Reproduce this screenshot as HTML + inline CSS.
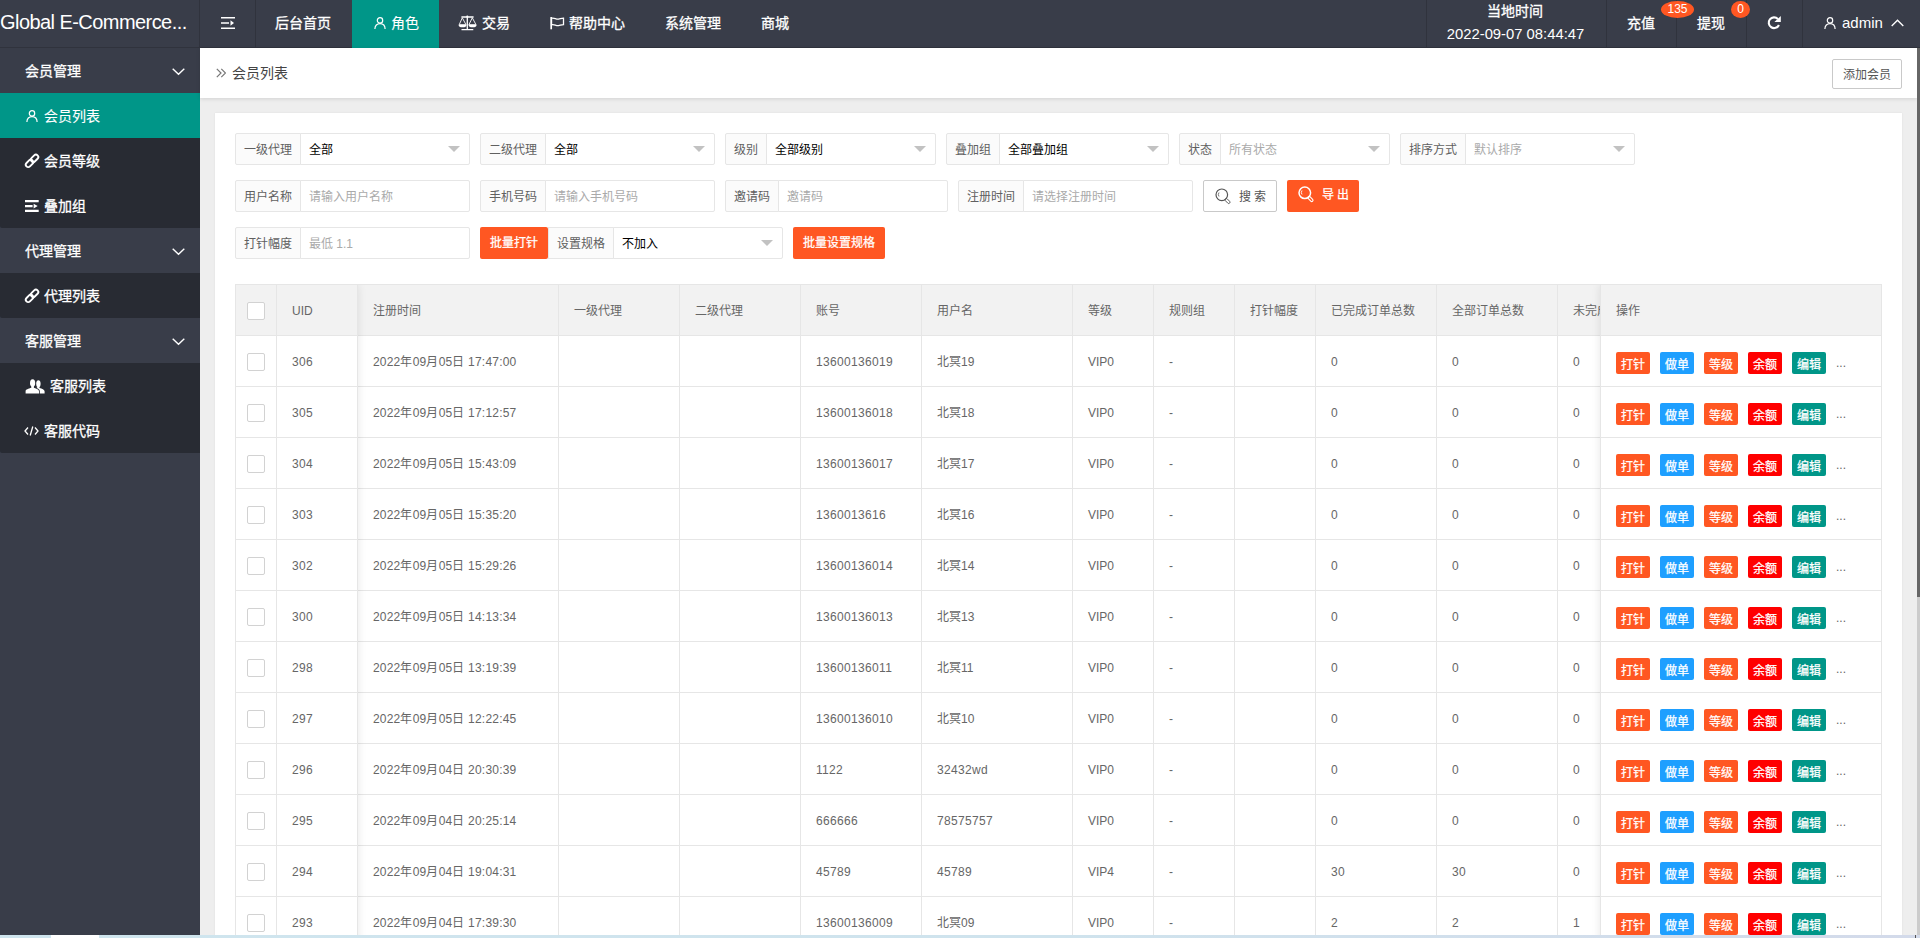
<!DOCTYPE html>
<html lang="zh-CN"><head><meta charset="utf-8"><title>会员列表</title>
<style>
*{box-sizing:border-box;margin:0;padding:0}
html,body{width:1920px;height:938px;overflow:hidden}
body{position:relative;background:#eeeeee;font-family:"Liberation Sans",sans-serif;font-size:14px;color:#333;line-height:1}
a{text-decoration:none;color:inherit}
i{font-style:normal}
svg{display:block}
.abs{position:absolute}
/* header */
.hd{position:absolute;left:0;top:0;width:1920px;height:48px;background:#393d49;border-bottom:1px solid #30333d;color:#fff}
.logo{position:absolute;left:0;top:0;width:200px;height:47px;line-height:45px;font-size:20px;white-space:nowrap;overflow:hidden;border-right:1px solid #30333d;letter-spacing:-.56px}
.flex{position:absolute;left:200px;top:0;width:56px;height:47px;border-right:1px solid #30333d}
.nav{position:absolute;top:0;height:47px;line-height:46px;font-size:14px;color:#fff;white-space:nowrap}
.nav.on{background:#009688;height:48px}
.nav svg{position:absolute}
.hr{position:absolute;top:0;height:47px;border-left:1px solid #30333d;color:#fff;text-align:center;white-space:nowrap}
.badge{position:absolute;height:17px;line-height:17px;border-radius:50%;background:#ff5722;color:#fff;font-size:12px;text-align:center}
/* sidebar */
.side{position:absolute;left:0;top:48px;width:200px;height:890px;background:#393d49;color:#fff}
.sp{position:absolute;left:0;width:200px;height:45px;line-height:47px;padding-left:25px;font-size:14px;color:#fff}
.sp svg{position:absolute;left:172px;top:20px}
.sc{position:absolute;left:0;width:200px;background:#282b33;border-radius:0 0 0 2px}
.si{position:relative;height:45px;line-height:47px;padding-left:44px;font-size:14px;color:#fff}
.si.on{background:#009688}
.si svg{position:absolute}
/* title bar */
.tb{position:absolute;left:200px;top:48px;width:1717px;height:50px;background:#fff;box-shadow:0 1px 4px rgba(0,0,0,.12);color:#444;font-size:14px;line-height:50px}
.tb .t{position:absolute;left:32px;top:0}
.tb svg{position:absolute;left:16px;top:20px}
.btn-add{position:absolute;left:1632px;top:11px;width:70px;height:30px;line-height:30px;border:1px solid #c9c9c9;border-radius:2px;background:#fff;color:#555;font-size:12px;text-align:center}
/* card */
.card{position:absolute;left:215px;top:113px;width:1687px;height:900px;background:#fff;box-shadow:0 0 2px 0 rgba(0,0,0,.07)}
/* form */
.fg{position:absolute;height:32px;font-size:12px;line-height:32px;white-space:nowrap}
.fg .l{position:absolute;left:0;top:0;height:32px;border:1px solid #e6e6e6;background:#fbfbfb;color:#606060;padding:0 8px;border-radius:2px 0 0 2px}
.fg .v{position:absolute;top:0;height:32px;width:170px;border:1px solid #e6e6e6;background:#fff;color:#000;padding-left:8px;border-radius:0 2px 2px 0}
.fg .v.ph{color:#aaa}
.fg .v.sel:after{content:"";position:absolute;right:9px;top:12px;border:6px solid transparent;border-top-color:#c2c2c2}
.btn{position:absolute;height:32px;line-height:32px;border-radius:2px;background:#ff5722;color:#fff;font-size:12px;text-align:center;white-space:nowrap}
.btn.pri{background:#fff;border:1px solid #c9c9c9;color:#555;line-height:33px}
/* table */
.tbl-wrap{position:absolute;left:235px;top:284px;width:1647px;height:700px;border:1px solid #e6e6e6;border-bottom:none;overflow:hidden;background:#fff}
.tbl{border-collapse:separate;border-spacing:0;table-layout:fixed;width:1443px;font-size:12px;color:#666}
.tbl th,.tbl td{height:51px;border-right:1px solid #e6e6e6;border-bottom:1px solid #e6e6e6;padding:0;text-align:left;font-weight:normal;vertical-align:middle;overflow:hidden}
.tbl th{background:#f2f2f2}
.tbl .c{padding:0 15px;height:28px;line-height:28px;white-space:nowrap;overflow:hidden;position:relative;top:1px}
.ck{text-align:center}
.cb{display:block;width:18px;height:18px;border:1px solid #d2d2d2;border-radius:2px;background:#fff;margin:2px 0 0 11px}
.fix-l{position:absolute;left:0;top:0;width:122px;height:700px;box-shadow:1px 0 8px rgba(0,0,0,.08);pointer-events:none}
.fix-r{position:absolute;left:1364px;top:0;width:282px;height:700px;background:#fff;border-left:1px solid #e6e6e6;box-shadow:-1px 0 8px rgba(0,0,0,.08);font-size:12px;color:#666}
.fr-h{height:51px;background:#f2f2f2;border-bottom:1px solid #e6e6e6;line-height:50px}
.fr-h .c{padding:0 15px;position:relative;top:1px}
.fr-r{position:relative;height:51px;border-bottom:1px solid #e6e6e6;white-space:nowrap}
.b{position:absolute;top:16px;width:34px;height:22px;line-height:26px;border-radius:2px;color:#fff;font-size:12px;text-align:center}
.b.o{background:#ff5722}.b.bl{background:#1e9fff}.b.r{background:#ff0000}.b.g{background:#009688}
.b:nth-child(1){left:15px}.b:nth-child(2){left:59px}.b:nth-child(3){left:103px}.b:nth-child(4){left:147px}.b:nth-child(5){left:191px}
.more{position:absolute;left:235px;top:20px;font-size:12px;line-height:14px;color:#666}
/* scrollbars */
.sb-track{position:absolute;left:1917px;top:48px;width:3px;height:890px;background:#cccccc}
.sb-thumb{position:absolute;left:1917px;top:48px;width:3px;height:549px;background:#666666}
.hbar{position:absolute;left:0;top:935px;width:1920px;height:3px;background:linear-gradient(to right,#cfe5ee 0%,#cfe3ed 55%,#d3daea 100%)}
.hbar i{position:absolute;left:51px;top:0;width:48px;height:3px;background:#fff}
.hbar b{position:absolute;left:1915px;top:0;width:1px;height:3px;background:#555}

.n{letter-spacing:.33px}.d{letter-spacing:.2px}
.hd,.side{-webkit-text-stroke:.3px #fff}
.badge,.logo,.lat{-webkit-text-stroke:0}
.b,.btn{-webkit-text-stroke:.25px #fff}.btn.pri{-webkit-text-stroke:0}
.si.on,.nav.on{-webkit-text-stroke:.12px #fff}

</style></head>
<body>
<!-- header -->
<div class="hd">
  <div class="logo">Global E-Commerce...</div>
  <div class="flex"><svg class="abs" style="left:21px;top:17px" width="14" height="12" viewBox="0 0 14 12"><path d="M0 .8h14M0 6h8M0 11.2h14" stroke="#fff" stroke-width="1.5" fill="none"/><path d="M9.5 3.2L13 6 9.5 8.8z" fill="#fff"/></svg></div>
  <a class="nav" style="left:255px;width:97px;padding-left:20px">后台首页</a>
  <a class="nav on" style="left:352px;width:87px;padding-left:39px"><svg style="left:21.500px;top:17px" width="12" height="12" viewBox="0 0 12 12"><circle cx="6" cy="3.400" r="2.700" fill="none" stroke="#fff" stroke-width="1.200"/><path d="M.9 12C.9 8.600 3 6.600 6 6.600s5.100 2 5.100 5.400" fill="none" stroke="#fff" stroke-width="1.200"/></svg>角色</a>
  <a class="nav" style="left:439px;width:91px;padding-left:43px"><svg style="left:19px;top:15px" width="19" height="16" viewBox="0 0 19 16"><path d="M3.400 2H15.600M9.300 2V14.600M3.500 14.600H15.300" stroke="#fff" stroke-width="1.300" fill="none"/><path d="M4.300 2.800L1.200 9.700H8zM14.300 2.800L10.900 9.700H18z" stroke="#fff" stroke-width=".9" fill="none" stroke-linejoin="round"/><path d="M.6 9.700H8.500A3.950 2.600 0 0 1 .6 9.700zM10.600 9.700H18.600A4 2.600 0 0 1 10.600 9.700z" fill="#fff"/><circle cx="9.300" cy="1.500" r="1.100" fill="#fff"/></svg>交易</a>
  <a class="nav" style="left:530px;width:115px;padding-left:39px"><svg style="left:20px;top:16.700px" width="15" height="13" viewBox="0 0 15 13"><path d="M1.200 0v12.300" stroke="#fff" stroke-width="1.700"/><path d="M1.5 1.3c2.5-1 4.5 1.2 7 .8 1.8-.3 3-1 5-1v6.5c-2 0-3.2.7-5 1-2.5.4-4.500-1.800-7-.800z" fill="none" stroke="#fff" stroke-width="1.3"/></svg>帮助中心</a>
  <a class="nav" style="left:645px;width:96px;padding-left:20px">系统管理</a>
  <a class="nav" style="left:741px;width:68px;padding-left:20px">商城</a>

  <div class="hr" style="left:1426px;width:180px"><div class="abs" style="left:-2px;width:180px;top:3px;font-size:14px;line-height:16px">当地时间</div><div class="abs lat" style="left:-1.500px;width:180px;top:25px;font-size:14.8px;line-height:18px">2022-09-07 08:44:47</div></div>
  <div class="hr" style="left:1606px;width:70px;line-height:46px;font-size:14px;padding-right:2px">充值</div>
  <div class="hr" style="left:1676px;width:70px;line-height:46px;font-size:14px;padding-right:2px">提现</div>
  <div class="hr" style="left:1746px;width:56px"><svg class="abs" style="left:20px;top:16px" width="14" height="14" viewBox="0 0 14 14"><path d="M10.880 2.920A5.350 5.350 0 1 0 11.950 8.960" fill="none" stroke="#fff" stroke-width="2.100"/><path d="M13.800.1V5.900H7.400z" fill="#fff"/></svg></div>
  <div class="hr" style="left:1802px;width:115px;text-align:left"><svg class="abs" style="left:21px;top:17px" width="12" height="12" viewBox="0 0 12 12"><circle cx="6" cy="3.400" r="2.700" fill="none" stroke="#fff" stroke-width="1.200"/><path d="M.9 12C.9 8.600 3 6.600 6 6.600s5.100 2 5.100 5.400" fill="none" stroke="#fff" stroke-width="1.200"/></svg><span class="abs lat" style="left:39px;top:0;line-height:45px;font-size:15px">admin</span><svg class="abs" style="left:88px;top:19px" width="13" height="8" viewBox="0 0 13 8"><path d="M.7 7L6.500 1.300 12.300 7" fill="none" stroke="#fff" stroke-width="1.400"/></svg></div>
  <span class="badge" style="left:1661px;top:1px;width:33px">135</span>
  <span class="badge" style="left:1731px;top:1px;width:19px">0</span>
</div>

<!-- sidebar -->
<div class="side">
  <div class="sp" style="top:0">会员管理<svg width="13" height="8" viewBox="0 0 13 8"><path d="M.7.7l5.800 5.600L12.300.7" fill="none" stroke="#fff" stroke-width="1.400"/></svg></div>
  <div class="sc" style="top:45px;height:135px">
    <div class="si on"><svg style="left:26.300px;top:17px" width="12" height="12" viewBox="0 0 12 12"><circle cx="6" cy="3.400" r="2.700" fill="none" stroke="#fff" stroke-width="1.200"/><path d="M.9 12C.9 8.600 3 6.600 6 6.600s5.100 2 5.100 5.400" fill="none" stroke="#fff" stroke-width="1.200"/></svg>会员列表</div>
    <div class="si"><svg style="left:24px;top:14.800px" width="16" height="16" viewBox="0 0 16 16"><g fill="none" stroke="#fff" stroke-width="1.900"><rect x="6.400" y="2.900" width="8.400" height="4.800" rx="2.400" transform="rotate(-45 10.600 5.300)"/><rect x="1.300" y="8" width="8.400" height="4.800" rx="2.400" transform="rotate(-45 5.500 10.400)"/></g></svg>会员等级</div>
    <div class="si"><svg style="left:25.400px;top:17px" width="14" height="12" viewBox="0 0 14 12"><path d="M0 1.100h13.700M0 6.100h7.600M0 10.800h13.700" stroke="#fff" stroke-width="2.200" fill="none"/><path d="M8.600 3.700L12.700 6.100 8.600 8.500z" fill="#fff"/></svg>叠加组</div>
  </div>
  <div class="sp" style="top:180px">代理管理<svg width="13" height="8" viewBox="0 0 13 8"><path d="M.7.7l5.800 5.600L12.300.7" fill="none" stroke="#fff" stroke-width="1.400"/></svg></div>
  <div class="sc" style="top:225px;height:45px">
    <div class="si"><svg style="left:24px;top:14.800px" width="16" height="16" viewBox="0 0 16 16"><g fill="none" stroke="#fff" stroke-width="1.900"><rect x="6.400" y="2.900" width="8.400" height="4.800" rx="2.400" transform="rotate(-45 10.600 5.300)"/><rect x="1.300" y="8" width="8.400" height="4.800" rx="2.400" transform="rotate(-45 5.500 10.400)"/></g></svg>代理列表</div>
  </div>
  <div class="sp" style="top:270px">客服管理<svg width="13" height="8" viewBox="0 0 13 8"><path d="M.7.7l5.800 5.600L12.300.7" fill="none" stroke="#fff" stroke-width="1.400"/></svg></div>
  <div class="sc" style="top:315px;height:90px">
    <div class="si" style="padding-left:50px"><svg style="left:25px;top:15.500px" width="20" height="15" viewBox="0 0 20 15"><g fill="#fff"><ellipse cx="7.600" cy="4" rx="2.600" ry="3.800"/><path d="M6.300 6.500h2.600v2.300c2.800.9 5.100 1.700 5.100 3.400v2.400H.6v-2.400c0-1.700 2.900-2.500 5.700-3.400z"/><ellipse cx="13.400" cy="4.700" rx="2.200" ry="3.500"/><path d="M12.800 7.500h1.700v1.500c2.500.8 5.100 1.600 5.100 3.300v2.300h-4.800v-2.400c0-1.500-1.300-2.400-3.200-3.100z"/></g></svg>客服列表</div>
    <div class="si"><svg style="left:24px;top:18px" width="15" height="10" viewBox="0 0 15 10"><path d="M4 1.500L1 5l3 3.500M11 1.500L14 5l-3 3.500M8.800.5L6.200 9.500" fill="none" stroke="#fff" stroke-width="1.300"/></svg>客服代码</div>
  </div>
</div>

<!-- title bar -->
<div class="tb"><svg width="10" height="10" viewBox="0 0 10 10"><path d="M.8.8L5 5 .8 9.200M5.300.8L9.500 5 5.300 9.200" fill="none" stroke="#777" stroke-width="1.200"/></svg><span class="t">会员列表</span><a class="btn-add">添加会员</a></div>

<!-- card + form -->
<div class="card"></div>
<div class="fg" style="left:235px;top:133px"><span class="l" style="width:66px">一级代理</span><span class="v sel" style="left:65px">全部</span></div>
<div class="fg" style="left:480px;top:133px"><span class="l" style="width:66px">二级代理</span><span class="v sel" style="left:65px">全部</span></div>
<div class="fg" style="left:725px;top:133px"><span class="l" style="width:42px">级别</span><span class="v sel" style="left:41px">全部级别</span></div>
<div class="fg" style="left:946px;top:133px"><span class="l" style="width:54px">叠加组</span><span class="v sel" style="left:53px">全部叠加组</span></div>
<div class="fg" style="left:1179px;top:133px"><span class="l" style="width:42px">状态</span><span class="v sel ph" style="left:41px">所有状态</span></div>
<div class="fg" style="left:1400px;top:133px"><span class="l" style="width:66px">排序方式</span><span class="v sel ph" style="left:65px">默认排序</span></div>

<div class="fg" style="left:235px;top:180px"><span class="l" style="width:66px">用户名称</span><span class="v ph" style="left:65px">请输入用户名称</span></div>
<div class="fg" style="left:480px;top:180px"><span class="l" style="width:66px">手机号码</span><span class="v ph" style="left:65px">请输入手机号码</span></div>
<div class="fg" style="left:725px;top:180px"><span class="l" style="width:54px">邀请码</span><span class="v ph" style="left:53px">邀请码</span></div>
<div class="fg" style="left:958px;top:180px"><span class="l" style="width:66px">注册时间</span><span class="v ph" style="left:65px">请选择注册时间</span></div>
<a class="btn pri" style="left:1203px;top:180px;width:74px;text-align:left;padding-left:35px"><svg class="abs" style="left:11px;top:7px" width="17" height="17" viewBox="0 0 17 17"><circle cx="6.800" cy="6.800" r="5.800" fill="none" stroke="#555" stroke-width="1.200"/><path d="M4 4.500a3.500 3.500 0 0 0 0 4" fill="none" stroke="#555" stroke-width=".8"/><rect x="11.200" y="10" width="2.600" height="6" rx="1.300" transform="rotate(-45 12.500 13)" fill="none" stroke="#555" stroke-width=".9"/></svg>搜 索</a>
<a class="btn" style="left:1287px;top:180px;width:72px;text-align:left;padding-left:34.500px;line-height:31px;font-size:12px"><svg class="abs" style="left:11px;top:5.500px" width="17" height="17" viewBox="0 0 17 17"><circle cx="6.800" cy="6.800" r="5.800" fill="none" stroke="#fff" stroke-width="1.500"/><path d="M4 4.500a3.500 3.500 0 0 0 0 4" fill="none" stroke="#fff" stroke-width=".9"/><rect x="11.200" y="10" width="2.600" height="6" rx="1.300" transform="rotate(-45 12.500 13)" fill="none" stroke="#fff" stroke-width="1.100"/></svg>导 出</a>

<div class="fg" style="left:235px;top:227px"><span class="l" style="width:66px">打针幅度</span><span class="v ph" style="left:65px">最低 1.1</span></div>
<a class="btn" style="left:480px;top:227px;width:68px">批量打针</a>
<div class="fg" style="left:548px;top:227px"><span class="l" style="width:66px;border-radius:0">设置规格</span><span class="v sel" style="left:65px">不加入</span></div>
<a class="btn" style="left:793px;top:227px;width:92px">批量设置规格</a>

<div class="tbl-wrap">
<table class="tbl"><colgroup><col style="width:41px"><col style="width:81px"><col style="width:201px"><col style="width:121px"><col style="width:121px"><col style="width:121px"><col style="width:151px"><col style="width:81px"><col style="width:81px"><col style="width:81px"><col style="width:121px"><col style="width:121px"><col style="width:121px"></colgroup>
<thead><tr><th class="ck"><i class="cb"></i></th><th><div class="c">UID</div></th><th><div class="c">注册时间</div></th><th><div class="c">一级代理</div></th><th><div class="c">二级代理</div></th><th><div class="c">账号</div></th><th><div class="c">用户名</div></th><th><div class="c">等级</div></th><th><div class="c">规则组</div></th><th><div class="c">打针幅度</div></th><th><div class="c">已完成订单总数</div></th><th><div class="c">全部订单总数</div></th><th><div class="c">未完成订单总数</div></th></tr></thead><tbody>
<tr><td class="ck"><i class="cb"></i></td><td><div class="c n">306</div></td><td><div class="c d">2022年09月05日 17:47:00</div></td><td><div class="c"></div></td><td><div class="c"></div></td><td><div class="c n">13600136019</div></td><td><div class="c">北冥19</div></td><td><div class="c">VIP0</div></td><td><div class="c">-</div></td><td><div class="c"></div></td><td><div class="c n">0</div></td><td><div class="c n">0</div></td><td><div class="c n">0</div></td></tr>
<tr><td class="ck"><i class="cb"></i></td><td><div class="c n">305</div></td><td><div class="c d">2022年09月05日 17:12:57</div></td><td><div class="c"></div></td><td><div class="c"></div></td><td><div class="c n">13600136018</div></td><td><div class="c">北冥18</div></td><td><div class="c">VIP0</div></td><td><div class="c">-</div></td><td><div class="c"></div></td><td><div class="c n">0</div></td><td><div class="c n">0</div></td><td><div class="c n">0</div></td></tr>
<tr><td class="ck"><i class="cb"></i></td><td><div class="c n">304</div></td><td><div class="c d">2022年09月05日 15:43:09</div></td><td><div class="c"></div></td><td><div class="c"></div></td><td><div class="c n">13600136017</div></td><td><div class="c">北冥17</div></td><td><div class="c">VIP0</div></td><td><div class="c">-</div></td><td><div class="c"></div></td><td><div class="c n">0</div></td><td><div class="c n">0</div></td><td><div class="c n">0</div></td></tr>
<tr><td class="ck"><i class="cb"></i></td><td><div class="c n">303</div></td><td><div class="c d">2022年09月05日 15:35:20</div></td><td><div class="c"></div></td><td><div class="c"></div></td><td><div class="c n">1360013616</div></td><td><div class="c">北冥16</div></td><td><div class="c">VIP0</div></td><td><div class="c">-</div></td><td><div class="c"></div></td><td><div class="c n">0</div></td><td><div class="c n">0</div></td><td><div class="c n">0</div></td></tr>
<tr><td class="ck"><i class="cb"></i></td><td><div class="c n">302</div></td><td><div class="c d">2022年09月05日 15:29:26</div></td><td><div class="c"></div></td><td><div class="c"></div></td><td><div class="c n">13600136014</div></td><td><div class="c">北冥14</div></td><td><div class="c">VIP0</div></td><td><div class="c">-</div></td><td><div class="c"></div></td><td><div class="c n">0</div></td><td><div class="c n">0</div></td><td><div class="c n">0</div></td></tr>
<tr><td class="ck"><i class="cb"></i></td><td><div class="c n">300</div></td><td><div class="c d">2022年09月05日 14:13:34</div></td><td><div class="c"></div></td><td><div class="c"></div></td><td><div class="c n">13600136013</div></td><td><div class="c">北冥13</div></td><td><div class="c">VIP0</div></td><td><div class="c">-</div></td><td><div class="c"></div></td><td><div class="c n">0</div></td><td><div class="c n">0</div></td><td><div class="c n">0</div></td></tr>
<tr><td class="ck"><i class="cb"></i></td><td><div class="c n">298</div></td><td><div class="c d">2022年09月05日 13:19:39</div></td><td><div class="c"></div></td><td><div class="c"></div></td><td><div class="c n">13600136011</div></td><td><div class="c">北冥11</div></td><td><div class="c">VIP0</div></td><td><div class="c">-</div></td><td><div class="c"></div></td><td><div class="c n">0</div></td><td><div class="c n">0</div></td><td><div class="c n">0</div></td></tr>
<tr><td class="ck"><i class="cb"></i></td><td><div class="c n">297</div></td><td><div class="c d">2022年09月05日 12:22:45</div></td><td><div class="c"></div></td><td><div class="c"></div></td><td><div class="c n">13600136010</div></td><td><div class="c">北冥10</div></td><td><div class="c">VIP0</div></td><td><div class="c">-</div></td><td><div class="c"></div></td><td><div class="c n">0</div></td><td><div class="c n">0</div></td><td><div class="c n">0</div></td></tr>
<tr><td class="ck"><i class="cb"></i></td><td><div class="c n">296</div></td><td><div class="c d">2022年09月04日 20:30:39</div></td><td><div class="c"></div></td><td><div class="c"></div></td><td><div class="c n">1122</div></td><td><div class="c n">32432wd</div></td><td><div class="c">VIP0</div></td><td><div class="c">-</div></td><td><div class="c"></div></td><td><div class="c n">0</div></td><td><div class="c n">0</div></td><td><div class="c n">0</div></td></tr>
<tr><td class="ck"><i class="cb"></i></td><td><div class="c n">295</div></td><td><div class="c d">2022年09月04日 20:25:14</div></td><td><div class="c"></div></td><td><div class="c"></div></td><td><div class="c n">666666</div></td><td><div class="c n">78575757</div></td><td><div class="c">VIP0</div></td><td><div class="c">-</div></td><td><div class="c"></div></td><td><div class="c n">0</div></td><td><div class="c n">0</div></td><td><div class="c n">0</div></td></tr>
<tr><td class="ck"><i class="cb"></i></td><td><div class="c n">294</div></td><td><div class="c d">2022年09月04日 19:04:31</div></td><td><div class="c"></div></td><td><div class="c"></div></td><td><div class="c n">45789</div></td><td><div class="c n">45789</div></td><td><div class="c">VIP4</div></td><td><div class="c">-</div></td><td><div class="c"></div></td><td><div class="c n">30</div></td><td><div class="c n">30</div></td><td><div class="c n">0</div></td></tr>
<tr><td class="ck"><i class="cb"></i></td><td><div class="c n">293</div></td><td><div class="c d">2022年09月04日 17:39:30</div></td><td><div class="c"></div></td><td><div class="c"></div></td><td><div class="c n">13600136009</div></td><td><div class="c">北冥09</div></td><td><div class="c">VIP0</div></td><td><div class="c">-</div></td><td><div class="c"></div></td><td><div class="c n">2</div></td><td><div class="c n">2</div></td><td><div class="c n">1</div></td></tr>
</tbody></table>
<div class="fix-l"></div>
<div class="fix-r"><div class="fr-h"><div class="c">操作</div></div>
<div class="fr-r"><a class="b o">打针</a><a class="b bl">做单</a><a class="b o">等级</a><a class="b r">余额</a><a class="b g">编辑</a><span class="more">...</span></div>
<div class="fr-r"><a class="b o">打针</a><a class="b bl">做单</a><a class="b o">等级</a><a class="b r">余额</a><a class="b g">编辑</a><span class="more">...</span></div>
<div class="fr-r"><a class="b o">打针</a><a class="b bl">做单</a><a class="b o">等级</a><a class="b r">余额</a><a class="b g">编辑</a><span class="more">...</span></div>
<div class="fr-r"><a class="b o">打针</a><a class="b bl">做单</a><a class="b o">等级</a><a class="b r">余额</a><a class="b g">编辑</a><span class="more">...</span></div>
<div class="fr-r"><a class="b o">打针</a><a class="b bl">做单</a><a class="b o">等级</a><a class="b r">余额</a><a class="b g">编辑</a><span class="more">...</span></div>
<div class="fr-r"><a class="b o">打针</a><a class="b bl">做单</a><a class="b o">等级</a><a class="b r">余额</a><a class="b g">编辑</a><span class="more">...</span></div>
<div class="fr-r"><a class="b o">打针</a><a class="b bl">做单</a><a class="b o">等级</a><a class="b r">余额</a><a class="b g">编辑</a><span class="more">...</span></div>
<div class="fr-r"><a class="b o">打针</a><a class="b bl">做单</a><a class="b o">等级</a><a class="b r">余额</a><a class="b g">编辑</a><span class="more">...</span></div>
<div class="fr-r"><a class="b o">打针</a><a class="b bl">做单</a><a class="b o">等级</a><a class="b r">余额</a><a class="b g">编辑</a><span class="more">...</span></div>
<div class="fr-r"><a class="b o">打针</a><a class="b bl">做单</a><a class="b o">等级</a><a class="b r">余额</a><a class="b g">编辑</a><span class="more">...</span></div>
<div class="fr-r"><a class="b o">打针</a><a class="b bl">做单</a><a class="b o">等级</a><a class="b r">余额</a><a class="b g">编辑</a><span class="more">...</span></div>
<div class="fr-r"><a class="b o">打针</a><a class="b bl">做单</a><a class="b o">等级</a><a class="b r">余额</a><a class="b g">编辑</a><span class="more">...</span></div>
</div>
</div>
<div class="sb-track"></div><div class="sb-thumb"></div>
<div class="hbar"><i></i><b></b></div>
</body></html>
